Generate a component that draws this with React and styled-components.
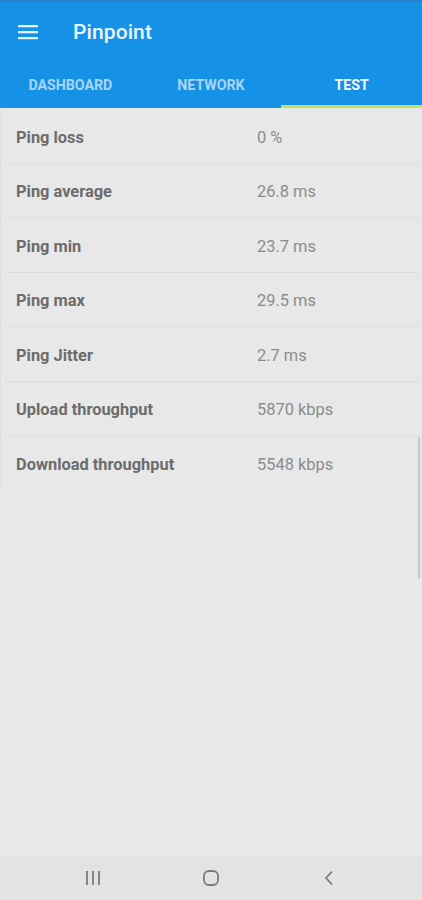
import React from "react";
import styled, { createGlobalStyle } from "styled-components";

const Global = createGlobalStyle`
  html, body { margin: 0; padding: 0; }
  body { font-family: Roboto, "Noto Sans", "Liberation Sans", sans-serif; background: #e8e8e8; }
`;

const Screen = styled.div`
  position: relative;
  width: 422px;
  height: 900px;
  display: flex;
  flex-direction: column;
  background: #e8e8e8;
  overflow: hidden;
`;

const Header = styled.header`
  background: #1592e6;
  border-top: 2px solid #2a80c9;
  display: flex;
  flex-direction: column;
`;

const Toolbar = styled.div`
  height: 60px;
  display: flex;
  align-items: center;
  padding-left: 18px;
  gap: 35px;
`;

const Title = styled.div`
  color: #eaf5fd;
  font-size: 21px;
  font-weight: 500;
  letter-spacing: 0.1px;
`;

const Tabs = styled.nav`
  display: grid;
  grid-template-columns: repeat(3, 1fr);
  height: 46px;
`;

const Tab = styled.div`
  display: flex;
  align-items: center;
  justify-content: center;
  font-size: 14.2px;
  font-weight: 700;
  color: ${(p) => (p.$active ? "#f4faff" : "#a9d5f6")};
  box-sizing: border-box;
  padding-top: 2px;
  border-bottom: 3px solid ${(p) => (p.$active ? "#c4e35a" : "#1592e6")};
`;

const List = styled.div`
  display: flex;
  flex-direction: column;
  padding: 1px 3px 0;
  border-left: 1px solid #e0e0e0;
`;

const Row = styled.div`
  height: 54.5px;
  box-sizing: border-box;
  display: grid;
  grid-template-columns: 241px 1fr;
  align-items: center;
  padding: 3px 0 0 12px;
  border-bottom: ${(p) => (p.$last ? "none" : "1px solid #dedede")};
`;

const Label = styled.span`
  font-size: 16.4px;
  font-weight: 700;
  color: #6c6c6c;
`;

const Value = styled.span`
  font-size: 16.4px;
  color: #8c8c8c;
`;

const Spacer = styled.div`
  flex: 1;
`;

const EdgeHandle = styled.div`
  position: absolute;
  right: 2px;
  top: 437px;
  width: 2px;
  height: 142px;
  background: #c8c8c8;
  border-radius: 1px;
`;

const NavBar = styled.div`
  height: 44px;
  background: #e3e3e3;
  display: grid;
  grid-template-columns: repeat(3, 118px);
  justify-content: center;
  align-items: center;
  justify-items: center;
`;

const rows = [
  ["Ping loss", "0 %"],
  ["Ping average", "26.8 ms"],
  ["Ping min", "23.7 ms"],
  ["Ping max", "29.5 ms"],
  ["Ping Jitter", "2.7 ms"],
  ["Upload throughput", "5870 kbps"],
  ["Download throughput", "5548 kbps"],
];

const Menu = () => (
  <svg width="20" height="16" viewBox="0 0 20 16">
    <g fill="#e6f3fd">
      <rect x="0" y="1" width="20" height="2.2" rx="0.5" />
      <rect x="0" y="7" width="20" height="2.2" rx="0.5" />
      <rect x="0" y="13" width="20" height="2.2" rx="0.5" />
    </g>
  </svg>
);

export default function App() {
  return (
    <Screen>
      <Global />
      <Header>
        <Toolbar>
          <Menu />
          <Title>Pinpoint</Title>
        </Toolbar>
        <Tabs>
          <Tab>DASHBOARD</Tab>
          <Tab>NETWORK</Tab>
          <Tab $active>TEST</Tab>
        </Tabs>
      </Header>
      <List>
        {rows.map(([l, v], i) => (
          <Row key={l} $last={i === rows.length - 1}>
            <Label>{l}</Label>
            <Value>{v}</Value>
          </Row>
        ))}
      </List>
      <Spacer />
      <EdgeHandle />
      <NavBar>
        <svg width="18" height="16" viewBox="0 0 18 16">
          <g stroke="#7a7a7a" strokeWidth="1.8">
            <line x1="3" y1="1" x2="3" y2="15" />
            <line x1="9" y1="1" x2="9" y2="15" />
            <line x1="15" y1="1" x2="15" y2="15" />
          </g>
        </svg>
        <svg width="18" height="18" viewBox="0 0 18 18">
          <rect x="2" y="2" width="14" height="14" rx="5" fill="none" stroke="#7a7a7a" strokeWidth="1.8" />
        </svg>
        <svg width="12" height="16" viewBox="0 0 12 16">
          <polyline points="9,1.5 3,8 9,14.5" fill="none" stroke="#7a7a7a" strokeWidth="1.8" />
        </svg>
      </NavBar>
    </Screen>
  );
}
